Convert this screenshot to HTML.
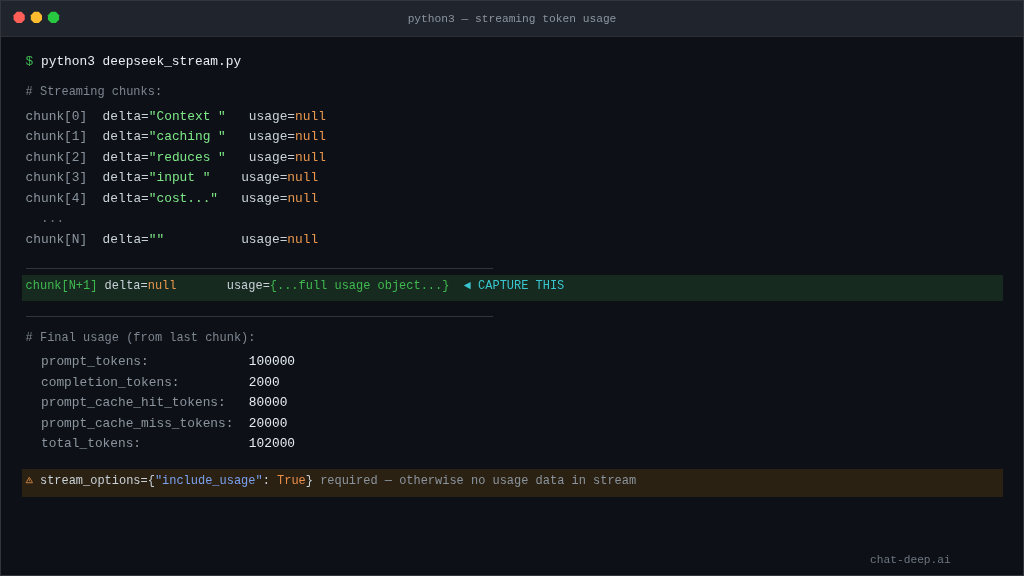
<!DOCTYPE html>
<html><head><meta charset="utf-8">
<style>
html,body{margin:0;padding:0;}
body{width:1024px;height:576px;overflow:hidden;background:#0d1117;position:relative;font-family:"Liberation Mono",monospace;}
#win{position:absolute;left:0;top:0;width:1022px;height:574px;border:1px solid #30363d;background:#0d1117;}
#bar{position:absolute;left:1px;top:1px;width:1022px;height:35px;background:#20242c;border-bottom:1px solid #2b3038;}
.dot{position:absolute;width:11.5px;height:11.5px;border-radius:50%;top:11.75px;}
.t{position:absolute;white-space:pre;line-height:1;}
.m{font-size:12.84px;}
.s{font-size:11.98px;}
.x{font-size:11.23px;}
.g{color:#8b949e;}
.w{color:#c9d1d9;}
.wb{color:#e6edf3;}
.gr{color:#7ee787;}
.or{color:#e8964e;}
.sep{position:absolute;left:26px;width:467px;height:1px;background:#30363d;}
#hl{position:absolute;left:22px;top:274.6px;width:981px;height:26.3px;background:#172a1f;}
#warn{position:absolute;left:22px;top:469.2px;width:981px;height:28.3px;background:#2a2113;}
</style></head><body><div id="root" style="position:absolute;left:0;top:0;width:1024px;height:576px;will-change:transform">
<div id="win"></div>
<div id="bar"></div>
<svg style="position:absolute;left:0;top:0" width="80" height="36"><polygon points="16.83,11.85 21.47,11.85 24.75,15.13 24.75,19.77 21.47,23.05 16.83,23.05 13.55,19.77 13.55,15.13" fill="#ff5f57"/><polygon points="34.08,11.85 38.72,11.85 42.00,15.13 42.00,19.77 38.72,23.05 34.08,23.05 30.80,19.77 30.80,15.13" fill="#febc2e"/><polygon points="51.18,11.85 55.82,11.85 59.10,15.13 59.10,19.77 55.82,23.05 51.18,23.05 47.90,19.77 47.90,15.13" fill="#28c840"/></svg>
<div class="t x g" style="left:0;width:1024px;text-align:center;top:13.5px;color:#8b949e">python3 — streaming token usage</div>

<div class="t m wb" style="left:25.6px;top:56px"><span style="color:#3fb950">$</span> python3 deepseek_stream.py</div>
<div class="t s" style="left:25.6px;top:86px;color:#7d8590"># Streaming chunks:</div>

<div class="t m w" style="left:25.6px;top:110.5px"><span class="g">chunk[0]</span>  delta=<span class="gr">"Context "</span>   usage=<span class="or">null</span></div>
<div class="t m w" style="left:25.6px;top:131px"><span class="g">chunk[1]</span>  delta=<span class="gr">"caching "</span>   usage=<span class="or">null</span></div>
<div class="t m w" style="left:25.6px;top:151.5px"><span class="g">chunk[2]</span>  delta=<span class="gr">"reduces "</span>   usage=<span class="or">null</span></div>
<div class="t m w" style="left:25.6px;top:172px"><span class="g">chunk[3]</span>  delta=<span class="gr">"input "</span>    usage=<span class="or">null</span></div>
<div class="t m w" style="left:25.6px;top:192.5px"><span class="g">chunk[4]</span>  delta=<span class="gr">"cost..."</span>   usage=<span class="or">null</span></div>
<div class="t m" style="left:25.6px;top:213px;color:#6e7681">  ...</div>
<div class="t m w" style="left:25.6px;top:233.5px"><span class="g">chunk[N]</span>  delta=<span class="gr">""</span>          usage=<span class="or">null</span></div>

<div class="sep" style="top:268px"></div>
<div id="hl"></div>
<div class="t s w" style="left:25.6px;top:280px"><span style="color:#3fb950">chunk[N+1]</span> delta=<span class="or">null</span>       usage=<span style="color:#3fb950">{...full usage object...}</span>  <span style="color:#39c5cf">◄ CAPTURE THIS</span></div>
<div class="sep" style="top:316px"></div>

<div class="t s" style="left:25.6px;top:331.5px;color:#7d8590"># Final usage (from last chunk):</div>
<div class="t m" style="left:25.6px;top:356px"><span class="g">  prompt_tokens:             </span><span class="wb">100000</span></div>
<div class="t m" style="left:25.6px;top:376.5px"><span class="g">  completion_tokens:         </span><span class="wb">2000</span></div>
<div class="t m" style="left:25.6px;top:397px"><span class="g">  prompt_cache_hit_tokens:   </span><span class="wb">80000</span></div>
<div class="t m" style="left:25.6px;top:417.5px"><span class="g">  prompt_cache_miss_tokens:  </span><span class="wb">20000</span></div>
<div class="t m" style="left:25.6px;top:438px"><span class="g">  total_tokens:              </span><span class="wb">102000</span></div>

<div id="warn"></div>
<div class="t s w" style="left:25.6px;top:475px">  stream_options={<span style="color:#7aa0ee">"include_usage"</span>: <span style="color:#ec8e48">True</span>} <span class="g">required — otherwise no usage data in stream</span></div>

<svg style="position:absolute;left:25px;top:476.3px" width="9" height="8" viewBox="0 0 9 8"><path d="M4.3 1.2 L7.5 6.75 L1.1 6.75 Z" fill="none" stroke="#c07c40" stroke-width="1.0" stroke-linejoin="round"/><path d="M4.3 3.2 V5.0" stroke="#c07c40" stroke-width="0.9"/><circle cx="4.3" cy="5.9" r="0.45" fill="#c07c40"/></svg>
<div class="t x" style="left:870px;top:555px;color:#6e7681">chat-deep.ai</div>
</div></body></html>
